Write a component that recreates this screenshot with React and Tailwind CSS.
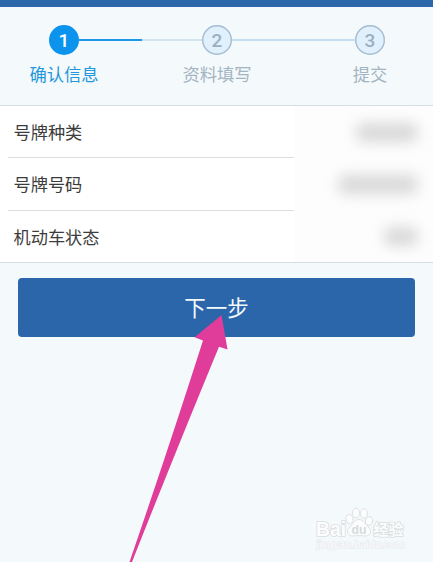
import { Fragment } from 'react';
import clsx from 'clsx';

const steps = [
  { id: 1, label: '确认信息', active: true },
  { id: 2, label: '资料填写', active: false },
  { id: 3, label: '提交', active: false },
];

const rows = [
  { label: '号牌种类', height: 'h-[52px]', mask: 'w-[62px]' },
  { label: '号牌号码', height: 'h-[53px]', mask: 'w-[80px]' },
  { label: '机动车状态', height: 'h-[51px]', mask: 'w-[34px]' },
];

function Stepper() {
  return (
    <div className="flex h-[98px] items-start pl-[49px] pr-[48px] pt-[18px]">
      {steps.map((step, i) => (
        <Fragment key={step.id}>
          {i > 0 && (
            <div className="mt-[15px] flex h-0.5 flex-1 items-start">
              {i === 1 && <div className="-mt-px h-0.5 w-[63px] bg-[#1c98e6]" />}
              <div className={clsx('-mt-px h-0.5 flex-1', i === 1 ? 'bg-[#cfe3f1]' : 'bg-[#c5def1]')} />
            </div>
          )}
          <div className="flex w-[30px] shrink-0 flex-col items-center">
            <div
              className={clsx(
                'flex h-[30px] w-[30px] items-center justify-center rounded-full text-[19px] leading-none font-medium font-["Roboto","Liberation_Sans",sans-serif]',
                step.active
                  ? 'bg-[#0c93ed] text-white'
                  : 'bg-[#e0f0fd] text-[#9aafc0] inset-ring-[1.4px] inset-ring-[#a6bccf]'
              )}
            >
              {step.id}
            </div>
            <span
              className={clsx(
                'mt-[7px] text-[17.3px] leading-6 whitespace-nowrap',
                step.active ? 'text-[#1f97da]' : 'text-[#a3b4c2]'
              )}
            >
              {step.label}
            </span>
          </div>
        </Fragment>
      ))}
    </div>
  );
}

function InfoList() {
  return (
    <div className="border-y border-[#d9dde0] bg-white">
      {rows.map((row, i) => (
        <div key={row.label} className={clsx('flex pl-2', row.height)}>
          <div
            className={clsx(
              'flex w-[286px] items-center pl-[5.5px] text-[17.2px] text-[#3c3c3c]',
              i < rows.length - 1 && 'border-b border-[#dedede]'
            )}
          >
            {row.label}
          </div>
          {/* Hidden personal value */}
          <div className="flex flex-1 items-center justify-end bg-[#fdfdfd] pr-[15px]">
            <div className={clsx('h-[19px] rounded-lg bg-[#d8d8d8] blur-[7px]', row.mask)} />
          </div>
        </div>
      ))}
    </div>
  );
}

function Arrow() {
  return (
    <svg className="pointer-events-none absolute inset-0" width="433" height="562" viewBox="0 0 433 562">
      <path
        d="M221.5 315 L194.5 337.3 L203 340.5 Q169 447 129.5 562 L132 562 Q173 458 219 346.7 L227.5 349.5 Z"
        fill="#e03c9a"
      />
    </svg>
  );
}

function Watermark() {
  return (
    <svg
      className="pointer-events-none absolute right-[24px] bottom-[8px] font-['Liberation_Sans','Noto_Sans_CJK_SC',sans-serif]"
      width="96"
      height="48"
      viewBox="313 506 96 48"
      fill="#fcfdfd"
      stroke="#dadee0"
      strokeWidth="0.9"
    >
      <ellipse cx="349.5" cy="519" rx="3.5" ry="4.5" transform="rotate(-12 349.5 519)" />
      <ellipse cx="356" cy="513" rx="3.5" ry="4.8" />
      <ellipse cx="364" cy="513.5" rx="3.5" ry="4.8" />
      <ellipse cx="369" cy="521" rx="3.5" ry="4.3" transform="rotate(14 369 521)" />
      <path d="M359 519.5 C354 519.5 352.5 525 349 528 C346 531 348 536.5 353 536 C357 535.5 361 535.5 365 536 C370.5 536.5 372 531 369 528 C366 525 364 519.5 359 519.5 Z" />
      <text x="316" y="535.5" fontSize="19.5" fontWeight="700" textLength="30" lengthAdjust="spacingAndGlyphs" paintOrder="stroke" strokeWidth="1.6">Bai</text>
      <text x="351.5" y="533.8" fontSize="13" fontWeight="700" fill="#d6dadc" stroke="none" textLength="15" lengthAdjust="spacingAndGlyphs">du</text>
      <text x="373.5" y="535" fontSize="15" fontWeight="700" textLength="30" lengthAdjust="spacingAndGlyphs" paintOrder="stroke" strokeWidth="1.6">经验</text>
      <text x="316.5" y="547.5" fontSize="10" strokeWidth="1.2" paintOrder="stroke" stroke="#e6eaec" textLength="88" lengthAdjust="spacingAndGlyphs">jingyan.baidu.com</text>
    </svg>
  );
}

function App() {
  return (
    <div className="relative h-[562px] w-[433px] overflow-hidden bg-[#f4f9fb] font-['Noto_Sans_CJK_SC',sans-serif]">
      <div className="h-[7px] bg-[#2c66ab]" />
      <Stepper />
      <InfoList />
      <div className="pt-[15px] pr-[18px] pl-[18px]">
        <button className="flex h-[59px] w-full items-center justify-center rounded bg-[#2b66aa] pb-px text-[21.5px] text-[#f4f9fb]">
          下一步
        </button>
      </div>
      <Arrow />
      <Watermark />
    </div>
  );
}

export default App;
